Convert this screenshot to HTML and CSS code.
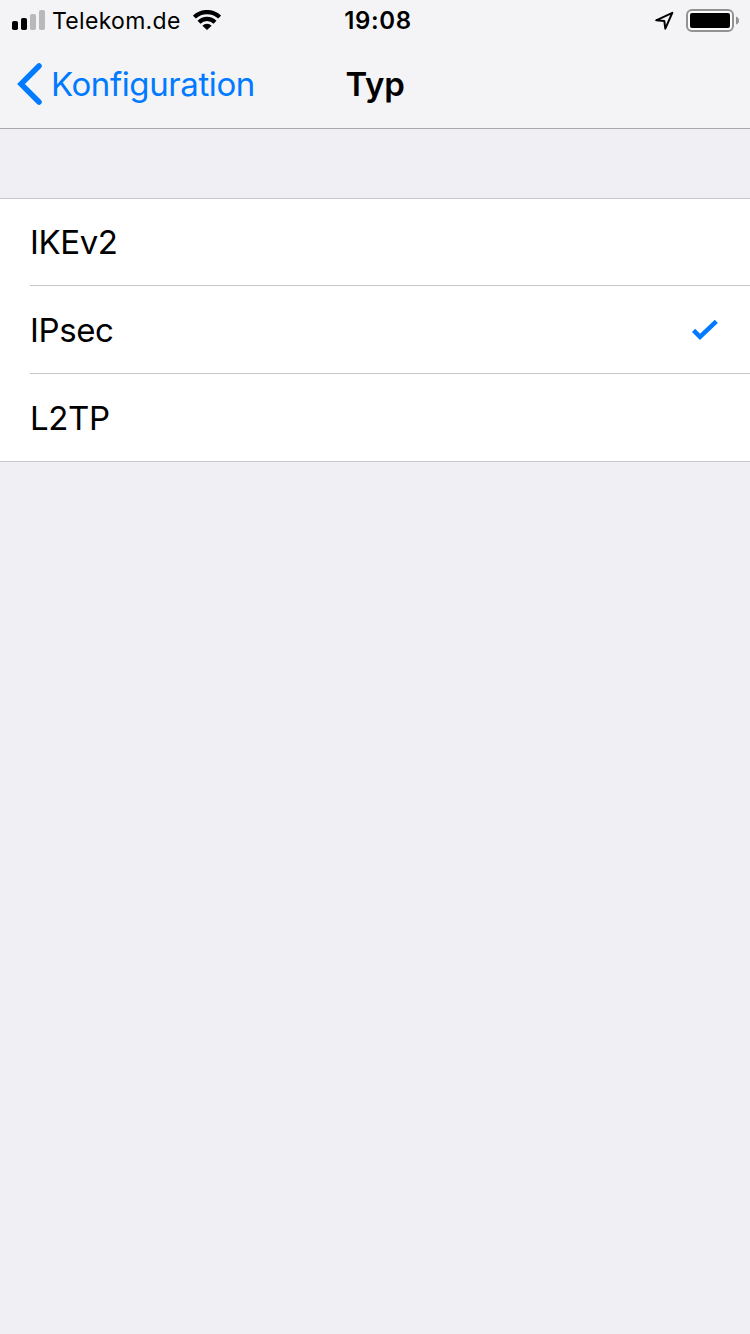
FILE: index.html
```html
<!DOCTYPE html>
<html lang="de">
<head>
<meta charset="utf-8">
<title>Typ</title>
<link rel="stylesheet" href="styles.css">
</head>
<body>
<header class="header">
  <div class="status">
    <div class="status-left">
      <svg class="signal" width="34" height="20" viewBox="0 0 34 20">
        <rect x="0" y="11" width="6" height="9" rx="1.8" fill="#000"/>
        <rect x="9" y="8" width="6" height="12" rx="1.8" fill="#000"/>
        <rect x="18" y="4" width="6" height="16" rx="1.8" fill="#b9b9bb"/>
        <rect x="27" y="0" width="6" height="20" rx="1.8" fill="#b9b9bb"/>
      </svg>
      <span class="carrier">Telekom.de</span>
      <svg class="wifi" width="28" height="20" viewBox="0 0 28 20">
        <g fill="none" stroke="#000" stroke-width="4.200">
          <path d="M1.400 7.100a18.200 18.200 0 0 1 25.200 0"/>
          <path d="M6 12.200a11.400 11.400 0 0 1 16 0"/>
        </g>
        <path d="M14 20l-4.600-4.300a6.400 6.400 0 0 1 9.200 0z"/>
      </svg>
    </div>
    <span class="time">19:08</span>
    <div class="status-right">
      <svg class="location" width="20" height="20" viewBox="0 0 20 20">
        <path d="M2.200 10.300L18.300 2.900L11.300 18.700L10.300 10.900Z" fill="none" stroke="#000" stroke-width="2" stroke-linejoin="round"/>
      </svg>
      <svg class="battery" width="54" height="24" viewBox="0 0 54 24">
        <rect x="1" y="1" width="46" height="21" rx="5" fill="#fbfbfc" stroke="#929294" stroke-width="2"/>
        <rect x="4" y="4" width="40" height="15" rx="2" fill="#000"/>
        <path d="M50 7.500q3 1 3 4t-3 4z" fill="#929294"/>
      </svg>
    </div>
  </div>
  <nav class="nav">
    <a class="back">
      <svg class="chevron" width="26" height="44" viewBox="0 0 26 44">
        <path d="M22 4L4 22L22 40" fill="none" stroke="#007aff" stroke-width="5.500" stroke-linecap="round" stroke-linejoin="miter"/>
      </svg>
      <span class="back-label">Konfiguration</span>
    </a>
    <h1 class="title">Typ</h1>
  </nav>
</header>
<main class="list">
  <div class="row"><span class="label">IKEv2</span></div>
  <div class="row"><span class="label">IPsec</span>
    <svg class="check" width="28" height="24" viewBox="0 0 28 24">
      <path d="M2.600 12.400L9 18.800L25.300 3.400" fill="none" stroke="#007aff" stroke-width="4.500"/>
    </svg>
  </div>
  <div class="row"><span class="label">L2TP</span></div>
</main>
</body>
</html>
```
FILE: styles.css
```css
* {
  box-sizing: border-box;
}

body {
  margin: 0;
  min-height: 1334px;
  background: #efeff4;
  color: #000;
  font-family: Inter, "Liberation Sans", sans-serif;
}

svg {
  display: block;
  flex: none;
}

.header {
  height: 129px;
  background: #f4f4f6;
  border-bottom: 1px solid #a9a9ac;
}

.status {
  display: grid;
  grid-template-columns: 1fr auto 1fr;
  align-items: center;
  height: 40px;
  padding: 0 10px 0 12px;
}

.status-left,
.status-right {
  display: flex;
  align-items: center;
}

.status-right {
  justify-content: flex-end;
  gap: 12px;
}

.carrier {
  margin: 2px 12px 0 6px;
  font-size: 23px;
  line-height: 30px;
  letter-spacing: 0.3px;
}

.time {
  margin: 2px 0 0 4px;
  font-size: 24px;
  line-height: 30px;
  font-weight: 600;
  letter-spacing: 0.6px;
}

.location {
  margin-bottom: 1px;
}

.battery {
  margin-top: 1px;
}

.nav {
  display: grid;
  grid-template-columns: 1fr auto 1fr;
  align-items: center;
  height: 88px;
  padding: 0 16px;
}

.back {
  display: flex;
  align-items: center;
  color: #007aff;
}

.chevron {
  margin-left: 1px;
}

.back-label {
  margin: 0 0 1px 8px;
  font-size: 33px;
  line-height: 42px;
  letter-spacing: -0.4px;
}

.title {
  margin: 0 0 1px;
  font-size: 33px;
  line-height: 42px;
  font-weight: 600;
  letter-spacing: -0.2px;
}

.list {
  margin-top: 69px;
  padding-left: 30px;
  background: #fff;
  border-top: 1px solid #c8c7cc;
  border-bottom: 1px solid #c8c7cc;
}

.row {
  display: flex;
  align-items: center;
  justify-content: space-between;
  height: 88px;
  padding-right: 31px;
  border-bottom: 1px solid #c8c7cc;
}

.row:first-child {
  height: 87px;
}

.row:last-child {
  height: 87px;
  border-bottom: 0;
}

.label {
  margin-top: 1px;
  font-size: 33px;
  line-height: 42px;
  letter-spacing: -0.4px;
}

.row:first-child .label {
  margin-top: 0;
}

.check {
  margin-top: 1px;
}
```
